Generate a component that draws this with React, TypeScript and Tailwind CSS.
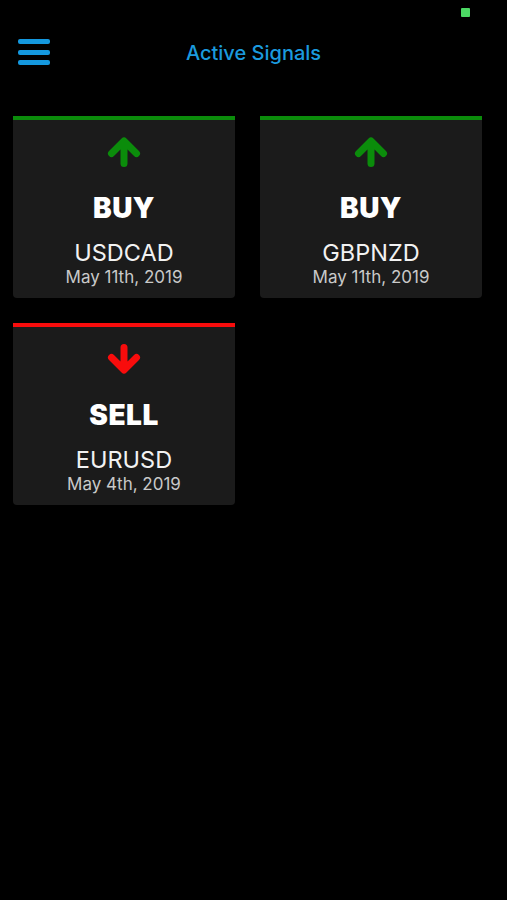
import React from 'react';

type Signal = {
  side: 'BUY' | 'SELL';
  pair: string;
  date: string;
};

const signals: Signal[] = [
  { side: 'BUY', pair: 'USDCAD', date: 'May 11th, 2019' },
  { side: 'BUY', pair: 'GBPNZD', date: 'May 11th, 2019' },
  { side: 'SELL', pair: 'EURUSD', date: 'May 4th, 2019' },
];

const Arrow = ({ up, color }: { up: boolean; color: string }) => (
  <svg width="34" height="30" viewBox="0 0 34 30" className={up ? '' : 'rotate-180'}>
    <path
      d="M17 26.5V4.5M4.5 16.5L17 4L29.5 16.5"
      fill="none"
      stroke={color}
      strokeWidth="7"
      strokeLinecap="round"
      strokeLinejoin="round"
    />
  </svg>
);

const SignalCard = ({ signal }: { signal: Signal }) => {
  const isBuy = signal.side === 'BUY';
  return (
    <div
      className={`h-[182px] bg-[#1b1b1b] rounded-b-[4px] border-t-[4px] flex flex-col items-center pt-[17px] ${
        isBuy ? 'border-[#0b8c0b]' : 'border-[#f80c0c]'
      }`}
    >
      <Arrow up={isBuy} color={isBuy ? '#0b8c0b' : '#f80c0c'} />
      <div className="mt-[27px] text-[28px] leading-none font-black text-white tracking-[0.5px]">
        {signal.side}
      </div>
      <div className="mt-[19px] text-[23.5px] leading-none text-[#f2f2f2]">{signal.pair}</div>
      <div className="mt-[4px] text-[17px] leading-none text-[#c9c9c9]">{signal.date}</div>
    </div>
  );
};

export default function App() {
  return (
    <div className="relative min-h-[900px] w-full bg-black font-['Inter',sans-serif]">
      {/* status dot */}
      <div className="absolute top-[8px] left-[461px] w-[9px] h-[9px] rounded-[1px] bg-[#4cd964]" />

      {/* Header */}
      <header className="h-[104px] grid grid-cols-[1fr_auto_1fr] items-center">
        <div className="pl-[18px]">
          <button className="flex flex-col gap-[5.5px] w-[32px]">
            <span className="block h-[5px] w-full rounded-[2px] bg-[#1498de]" />
            <span className="block h-[5px] w-full rounded-[2px] bg-[#1498de]" />
            <span className="block h-[5px] w-full rounded-[2px] bg-[#1498de]" />
          </button>
        </div>
        <h1 className="text-[20px] font-medium text-[#1b9ade] pt-[1px]">Active Signals</h1>
        <div />
      </header>

      {/* Cards */}
      <div className="pt-[12px] pl-[13px] grid grid-cols-[222px_222px] gap-x-[25px] gap-y-[25px]">
        {signals.map((s) => (
          <SignalCard key={s.pair} signal={s} />
        ))}
      </div>
    </div>
  );
}
